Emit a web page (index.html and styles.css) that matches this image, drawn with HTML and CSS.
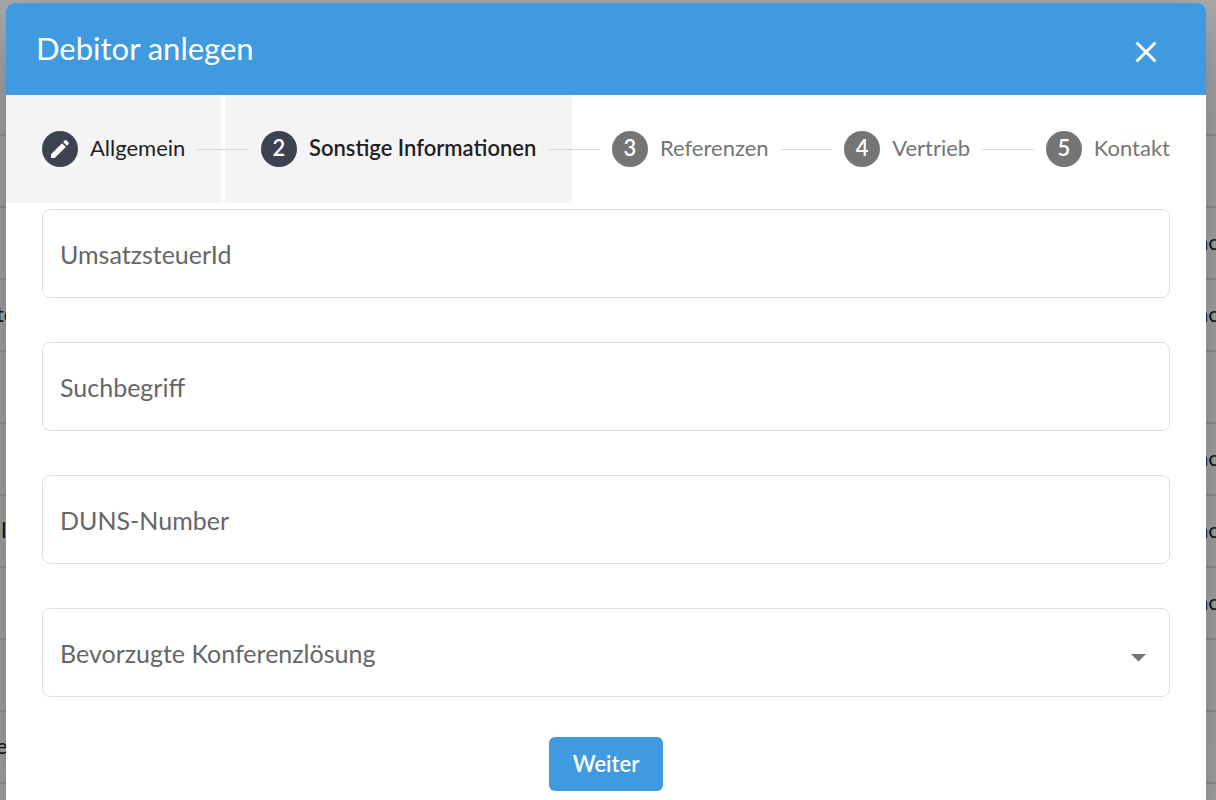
FILE: index.html
```html
<!DOCTYPE html>
<html lang="de">
<head>
<meta charset="utf-8">
<meta name="viewport" content="width=device-width, initial-scale=1">
<title>Debitor anlegen</title>
<link rel="stylesheet" href="styles.css">
</head>
<body>
<div class="page">
  <ul class="rows" aria-hidden="true">
    <li class="row"></li>
    <li class="row"></li>
    <li class="row"><span></span><span class="row-end">nc</span></li>
    <li class="row"><span>te</span><span class="row-end">nc</span></li>
    <li class="row"></li>
    <li class="row"><span></span><span class="row-end">nc</span></li>
    <li class="row"><span>ll</span><span class="row-end">nc</span></li>
    <li class="row"><span></span><span class="row-end">nc</span></li>
    <li class="row"></li>
    <li class="row"><span>e</span></li>
    <li class="row"></li>
  </ul>
  <div class="backdrop">
    <main class="dialog" role="dialog" aria-labelledby="title">
      <header class="dialog-header">
        <h1 class="title" id="title">Debitor anlegen</h1>
        <button class="close" type="button" aria-label="Schließen">
          <svg width="22" height="22" viewBox="0 0 22 22" fill="none" stroke="currentColor" stroke-width="3"><path d="M1.5 1.5l19 19M20.5 1.5l-19 19"/></svg>
        </button>
      </header>
      <nav class="steps">
        <button class="step step-done" type="button">
          <span class="badge"><svg width="24" height="24" viewBox="0 0 24 24" fill="currentColor"><path d="M3 17.25V21h3.75L17.81 9.94l-3.75-3.75L3 17.25zM20.71 7.04c.39-.39.39-1.02 0-1.41l-2.34-2.34c-.39-.39-1.02-.39-1.41 0l-1.83 1.83 3.75 3.75 1.83-1.83z"/></svg></span>
          <span class="step-name">Allgemein</span>
        </button>
        <span class="line"></span>
        <button class="step step-active" type="button" aria-current="step"><span class="badge">2</span><span class="step-name">Sonstige Informationen</span></button>
        <span class="line"></span>
        <button class="step" type="button"><span class="badge">3</span><span class="step-name">Referenzen</span></button>
        <span class="line"></span>
        <button class="step" type="button"><span class="badge">4</span><span class="step-name">Vertrieb</span></button>
        <span class="line"></span>
        <button class="step" type="button"><span class="badge">5</span><span class="step-name">Kontakt</span></button>
      </nav>
      <form class="form">
        <div class="fields">
          <div class="field"><input class="control" id="vat" type="text"><label class="label" for="vat">UmsatzsteuerId</label></div>
          <div class="field"><input class="control" id="term" type="text"><label class="label" for="term">Suchbegriff</label></div>
          <div class="field"><input class="control" id="duns" type="text"><label class="label" for="duns">DUNS-Number</label></div>
          <div class="field">
            <select class="control" id="conference"><option value=""></option></select>
            <label class="label" for="conference">Bevorzugte Konferenzlösung</label>
            <svg class="arrow" width="15" height="8" viewBox="0 0 15 8" fill="currentColor"><path d="M0 0h15L7.5 7.500z"/></svg>
          </div>
        </div>
        <button class="submit" type="button">Weiter</button>
      </form>
    </main>
  </div>
</div>
</body>
</html>
```
FILE: styles.css
```css
* {
  box-sizing: border-box;
}

body {
  margin: 0;
  font-family: Lato, "Open Sans", sans-serif;
  color: #1f1f1f;
}

button,
input,
select {
  font: inherit;
}

.page {
  position: relative;
  height: 100vh;
  overflow: hidden;
  background: #fff;
}

.rows {
  margin: 0 0 0 -4px;
  padding: 64px 0 0;
  list-style: none;
  font-size: 22px;
}

.row {
  display: flex;
  align-items: center;
  justify-content: space-between;
  height: 72px;
  padding-bottom: 4px;
  border-bottom: 2px solid #e0e0e0;
}

.row-end {
  width: 20px;
  white-space: nowrap;
}

.backdrop {
  position: absolute;
  inset: 0;
  padding: 3px 10px 0 6px;
  background: rgba(0, 0, 0, 0.32);
}

.dialog {
  min-height: 100%;
  border-radius: 8px 8px 0 0;
  background: #fff;
  box-shadow: 0 22px 30px -14px rgba(0, 0, 0, 0.2), 0 48px 76px 6px rgba(0, 0, 0, 0.14), 0 18px 92px 16px rgba(0, 0, 0, 0.12);
}

.dialog-header {
  display: flex;
  align-items: center;
  justify-content: space-between;
  height: 92px;
  padding: 0 44px 0 30px;
  border-radius: 8px 8px 0 0;
  background: #409ae0;
  color: #fff;
}

.title {
  margin: 0;
  padding-bottom: 2px;
  font-size: 31px;
  font-weight: 400;
  line-height: 40px;
}

.close {
  display: flex;
  padding: 6px 5px 0;
  border: 0;
  background: none;
  color: inherit;
}

.steps {
  display: flex;
  align-items: center;
}

.step {
  display: flex;
  align-items: center;
  gap: 12px;
  height: 108px;
  padding: 0 36px;
  border: 0;
  background: none;
  color: #757575;
  font-size: 22px;
  line-height: 28px;
  white-space: nowrap;
}

.step-done,
.step-active {
  background: #f4f4f4;
  color: #1f1f1f;
}

.step-name {
  padding-bottom: 3px;
}

.step-active {
  font-weight: 600;
}

.badge {
  display: flex;
  align-items: center;
  justify-content: center;
  width: 36px;
  height: 36px;
  padding-bottom: 2px;
  border-radius: 50%;
  background: #757575;
  color: #fff;
  font-weight: 600;
}

.step-done .badge {
  padding-bottom: 0;
}

.step-done .badge,
.step-active .badge {
  background: #3d4250;
}

.line {
  z-index: 1;
  flex: 1;
  height: 1px;
  margin: 0 -24px;
  background: #d8d8d8;
}

.form {
  display: flex;
  flex-direction: column;
  gap: 40px;
  padding: 6px 36px 8px;
}

.fields {
  display: grid;
  gap: 44px;
}

.field {
  position: relative;
  display: flex;
  height: 89px;
}

.control {
  width: 100%;
  padding: 0 18px;
  border: 1px solid #dfdfdf;
  border-radius: 8px;
  background: #fff;
  font-size: 25px;
  appearance: none;
}

.label {
  position: absolute;
  top: 29px;
  left: 18px;
  color: #666;
  font-size: 25px;
  line-height: 32px;
  pointer-events: none;
}

.arrow {
  position: absolute;
  top: 46px;
  right: 24px;
  color: #757575;
  pointer-events: none;
}

.submit {
  align-self: center;
  height: 54px;
  padding: 0 24px 2px;
  border: 0;
  border-radius: 6px;
  background: #409ae0;
  color: #fff;
  font-size: 22px;
  font-weight: 600;
}
```
